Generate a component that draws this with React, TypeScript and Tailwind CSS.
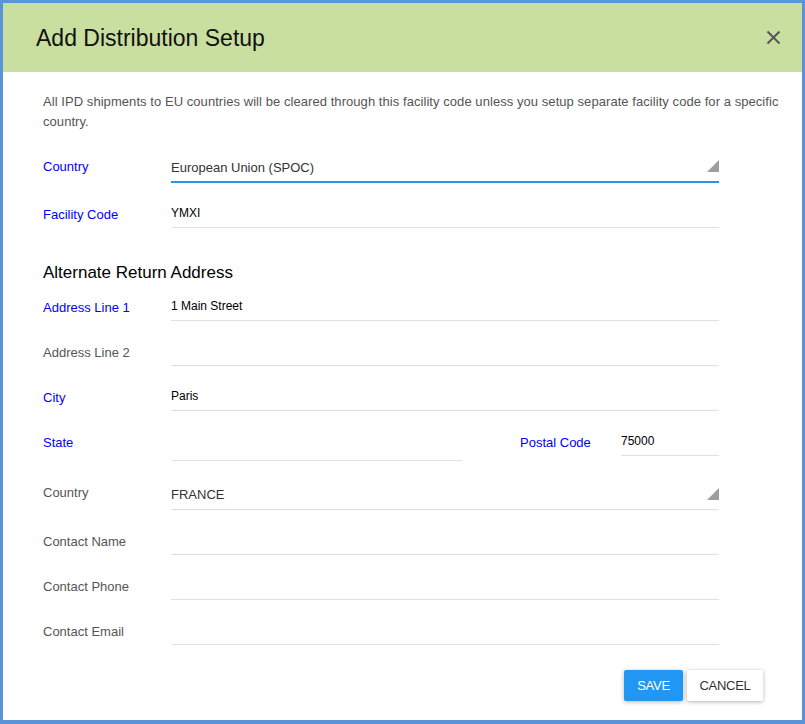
import React from "react";

const F = { fontFamily: '"Liberation Sans", Arial, sans-serif' };

function Triangle({ className }: { className: string }) {
  return (
    <svg width="12" height="12" viewBox="0 0 12 12" className={className}>
      <polygon points="12,0 12,12 0,12" fill="#9e9e9e" />
    </svg>
  );
}

function Label({ text, blue, pt = "pt-[9px]", w = "w-[128px]" }: { text: string; blue?: boolean; pt?: string; w?: string }) {
  return (
    <div className={`${w} shrink-0 ${pt} text-[13px] leading-[16px] ${blue ? "text-[#0000ff]" : "text-[#555555]"}`}>
      {text}
    </div>
  );
}

function InputRow({ label, blue, value, mt = "mt-[15px]" }: { label: string; blue?: boolean; value?: string; mt?: string }) {
  return (
    <div className={`flex items-start ${mt}`}>
      <Label text={label} blue={blue} />
      <div className="w-[548px] h-[30px] border-b border-[#e0e0e0] pt-[7px] text-[12px] leading-[16px] text-black">
        {value}
      </div>
    </div>
  );
}

export default function App() {
  return (
    <div
      style={F}
      className="w-[805px] h-[724px] box-border bg-white border-solid border-[#5b93d9] border-x-[3px] border-t-[3px] border-b-4 flex flex-col"
    >
      <div className="h-[69px] shrink-0 bg-[#c8dfa0] flex items-center justify-between pl-[33px] pr-[21px]">
        <div className="text-[23px] leading-[28px] text-[#111111]">Add Distribution Setup</div>
        <svg width="15" height="15" viewBox="0 0 15 15">
          <line x1="1.5" y1="1.5" x2="13.5" y2="13.5" stroke="#555555" strokeWidth="2" />
          <line x1="13.5" y1="1.5" x2="1.5" y2="13.5" stroke="#555555" strokeWidth="2" />
        </svg>
      </div>

      <div className="pl-[40px] flex flex-col">
        <div className="pt-[20px] text-[13px] leading-[20px] text-[#555555] tracking-[0.06px]">
          <div className="whitespace-nowrap">
            All IPD shipments to EU countries will be cleared through this facility code unless you setup separate facility code for a specific
          </div>
          <div>country.</div>
        </div>

        {/* Country select */}
        <div className="flex items-start mt-[21px]">
          <Label text="Country" blue pt="pt-[6px]" />
          <div className="w-[548px] h-[30px] border-b-2 border-[#2196f3] flex justify-between items-start">
            <div className="pt-[7px] text-[13px] leading-[16px] text-[#333333]">European Union (SPOC)</div>
            <Triangle className="mt-[7px]" />
          </div>
        </div>

        <InputRow label="Facility Code" blue value="YMXI" />

        <div className="mt-[35px] text-[17px] leading-[20px] text-black">Alternate Return Address</div>

        <InputRow label="Address Line 1" blue value="1 Main Street" mt="mt-[8px]" />
        <InputRow label="Address Line 2" />
        <InputRow label="City" blue value="Paris" />

        {/* State / Postal */}
        <div className="flex items-start mt-[15px]">
          <Label text="State" blue />
          <div className="w-[291px] h-[35px] border-b border-[#e0e0e0]" />
          <div className="ml-[58px]">
            <Label text="Postal Code" blue w="w-[101px]" />
          </div>
          <div className="w-[98px] h-[30px] border-b border-[#e0e0e0] pt-[7px] text-[12px] leading-[16px] text-black">
            75000
          </div>
        </div>

        {/* Country 2 */}
        <div className="flex items-start mt-[19px]">
          <Label text="Country" pt="pt-[5px]" />
          <div className="w-[548px] h-[30px] border-b border-[#e0e0e0] flex justify-between items-start">
            <div className="pt-[7px] text-[13px] leading-[16px] text-[#333333]">FRANCE</div>
            <Triangle className="mt-[8px]" />
          </div>
        </div>

        <InputRow label="Contact Name" />
        <InputRow label="Contact Phone" />
        <InputRow label="Contact Email" />

        <div className="flex justify-end gap-[4px] pr-[39px] mt-[25px]">
          <button
            style={F}
            className="w-[59px] h-[31px] rounded-[2px] bg-[#2196f3] text-white text-[13px] tracking-[-0.3px] shadow-[0_1px_4px_rgba(0,0,0,0.3)]"
          >
            SAVE
          </button>
          <button
            style={F}
            className="w-[76px] h-[31px] rounded-[2px] bg-white text-[#333333] text-[13px] tracking-[-0.3px] shadow-[0_1px_4px_rgba(0,0,0,0.3)]"
          >
            CANCEL
          </button>
        </div>
      </div>
    </div>
  );
}
